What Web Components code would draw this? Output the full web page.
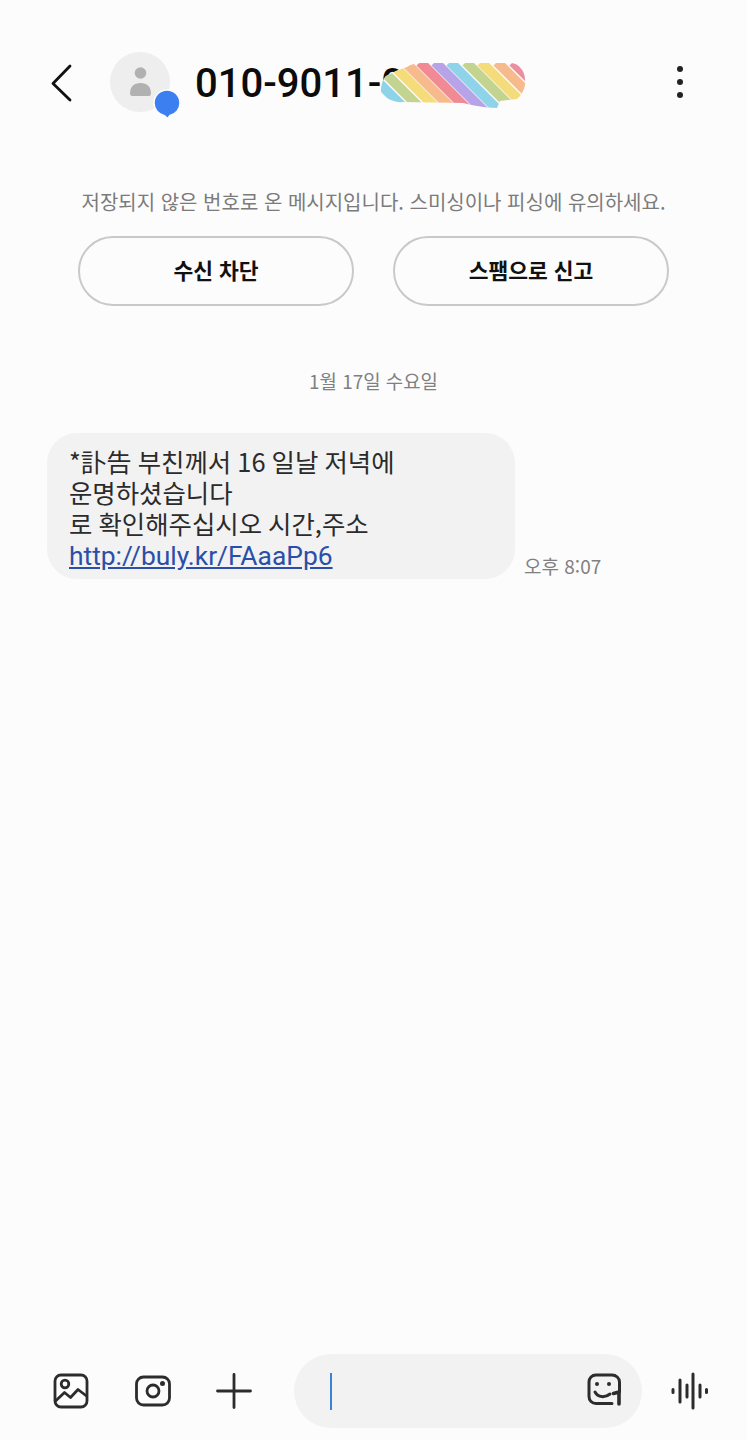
<!DOCTYPE html>
<html lang="ko">
<head>
<meta charset="utf-8">
<title>메시지</title>
<style>
  html, body { margin: 0; padding: 0; background: #fcfcfc; }
  body { font-family: "Noto Sans CJK KR", "Noto Sans", sans-serif; }
</style>
</head>
<body>
<sms-screen>
  <app-bar slot="top" number="010-9011-0"></app-bar>
  <spam-notice slot="top">저장되지 않은 번호로 온 메시지입니다. 스미싱이나 피싱에 유의하세요.</spam-notice>
  <date-line slot="top">1월 17일 수요일</date-line>
  <msg-bubble slot="top" time="오후 8:07">*訃告 부친께서 16 일날 저녁에<br>운명하셨습니다<br>로 확인해주십시오 시간,주소<br><a href="#">http://buly.kr/FAaaPp6</a></msg-bubble>
  <composer-bar slot="bottom"></composer-bar>
</sms-screen>

<script>
function makeTemplate(html) {
  const t = document.createElement('template');
  t.innerHTML = html;
  return t;
}

const screenTpl = makeTemplate(`
  <style>
    :host { display: flex; flex-direction: column; justify-content: space-between; height: 1440px; overflow: hidden; background: #fcfcfc; }
  </style>
  <div><slot name="top"></slot></div>
  <div><slot name="bottom"></slot></div>
`);

class SmsScreen extends HTMLElement {
  constructor() {
    super();
    this.attachShadow({ mode: 'open' });
    this.shadowRoot.appendChild(screenTpl.content.cloneNode(true));
  }
}

const barTpl = makeTemplate(`
  <style>
    :host { display: flex; align-items: center; height: 60px; padding: 52px 0 0 0; }
    .back { width: 24px; height: 40px; margin: 2px 0 0 49px; flex: none; }
    .avatar { position: relative; width: 60px; height: 60px; margin-left: 37px; flex: none; border-radius: 50%; background: #eeeeee; }
    .avatar svg.person { display: block; width: 60px; height: 60px; }
    .badge { position: absolute; left: 43px; top: 37px; width: 28px; height: 30px; }
    .number { position: relative; margin: 3px 0 0 25px; font: 500 40px/60px Roboto, "Noto Sans", sans-serif; color: #0c0c0c; white-space: nowrap; width: 330px; }
    .scribble { position: absolute; left: 186px; top: 8px; width: 146px; height: 48px; }
    .more { width: 10px; height: 36px; margin-left: 150px; flex: none; }
  </style>
  <svg class="back" viewBox="0 0 24 40"><path d="M21 3 L4 20.5 L21 37" fill="none" stroke="#111" stroke-width="2.8" stroke-linecap="round" stroke-linejoin="round"/></svg>
  <div class="avatar">
    <svg class="person" viewBox="0 0 60 60">
      <circle cx="30.500" cy="21" r="5.800" fill="#b1b1b1"/>
      <path d="M20 41.500 C20 35 24 31 30.500 31 C37 31 41 35 41 41.500 C41 43 40 44 39 44 H22 C21 44 20 43 20 41.500 Z" fill="#b1b1b1"/>
    </svg>
    <svg class="badge" viewBox="0 0 28 30">
      <path d="M14 1 C6.800 1 1 6.800 1 14 C1 20.500 5.500 25.500 11.500 26.700 L14.500 29.500 L17 26.500 C23 25.200 27 20 27 14 C27 6.800 21.200 1 14 1 Z" fill="#3b7ff0" stroke="#fcfcfc" stroke-width="1.500"/>
    </svg>
  </div>
  <div class="number"><span id="num"></span>
    <svg class="scribble" viewBox="0 0 146 48">
      <defs>
        <clipPath id="blob">
          <path d="M0 30 C0 22 2 17 5 14 L15 9 L26 5 C30 2 36 1 40 1 L130 1 C138 1 144 10 144 17 C145 24 142 32 136 37 L119 39 L116 46 C105 46 90 43 82 41 L22 40 C14 41 2 36 0 30 Z"/>
        </clipPath>
      </defs>
      <rect width="146" height="48" fill="#fcfcfc" clip-path="url(#blob)"/>
      <g clip-path="url(#blob)" fill="none" stroke-width="10">
        <path d="M-23 0 L32 55" stroke="#8fd3e8"/>
        <path d="M-7 0 L48 55" stroke="#c3d490"/>
        <path d="M9 0 L64 55" stroke="#f5dc7a"/>
        <path d="M24 0 L79 55" stroke="#f7ba8c"/>
        <path d="M39 0 L94 55" stroke="#f08b96"/>
        <path d="M54 0 L109 55" stroke="#b7a3e8"/>
        <path d="M69 0 L124 55" stroke="#8fd3e8"/>
        <path d="M85 0 L140 55" stroke="#c3d490"/>
        <path d="M100 0 L155 55" stroke="#f5dc7a"/>
        <path d="M116 0 L171 55" stroke="#f7ba8c"/>
        <path d="M132 0 L187 55" stroke="#e98fa0"/>
      </g>
    </svg>
  </div>
  <svg class="more" viewBox="0 0 10 36">
    <circle cx="5" cy="5" r="3" fill="#222"/>
    <circle cx="5" cy="18" r="3" fill="#222"/>
    <circle cx="5" cy="31" r="3" fill="#222"/>
  </svg>
`);

class AppBar extends HTMLElement {
  constructor() {
    super();
    this.attachShadow({ mode: 'open' });
    this.shadowRoot.appendChild(barTpl.content.cloneNode(true));
    this.shadowRoot.getElementById('num').textContent = this.getAttribute('number');
  }
}

const noticeTpl = makeTemplate(`
  <style>
    :host { display: block; margin-top: 76px; font-family: "Noto Sans CJK KR", sans-serif; }
    p { margin: 0; text-align: center; font-size: 20px; line-height: 28px; color: #7b7b7b; white-space: nowrap; }
    .btns { display: flex; gap: 39px; margin: 20px 0 0 78px; }
  </style>
  <p><slot></slot></p>
  <div class="btns">
    <pill-button>수신 차단</pill-button>
    <pill-button>스팸으로 신고</pill-button>
  </div>
`);

class SpamNotice extends HTMLElement {
  constructor() {
    super();
    this.attachShadow({ mode: 'open' });
    this.shadowRoot.appendChild(noticeTpl.content.cloneNode(true));
  }
}

const pillTpl = makeTemplate(`
  <style>
    :host { display: flex; align-items: center; justify-content: center; box-sizing: border-box; width: 276px; height: 70px; padding-bottom: 3px; border: 2px solid #c9c9c9; border-radius: 35px; font: 700 21.500px "Noto Sans CJK KR", sans-serif; color: #111; }
  </style>
  <slot></slot>
`);

class PillButton extends HTMLElement {
  constructor() {
    super();
    this.attachShadow({ mode: 'open' });
    this.shadowRoot.appendChild(pillTpl.content.cloneNode(true));
  }
}

const dateTpl = makeTemplate(`
  <style>
    :host { display: block; margin-top: 63px; text-align: center; font: 400 18.900px/24px "Noto Sans CJK KR", sans-serif; color: #808080; }
  </style>
  <slot></slot>
`);

class DateLine extends HTMLElement {
  constructor() {
    super();
    this.attachShadow({ mode: 'open' });
    this.shadowRoot.appendChild(dateTpl.content.cloneNode(true));
  }
}

const bubbleTpl = makeTemplate(`
  <style>
    :host { display: flex; align-items: flex-end; gap: 9px; margin: 40px 0 0 47px; }
    .bubble { box-sizing: border-box; width: 468px; height: 146px; padding: 13px 0 0 22px; background: #f2f2f2; border-radius: 30px; font: 400 25.400px/31px "Noto Sans CJK KR", Roboto, sans-serif; word-spacing: -1px; color: #2b2b2b; white-space: nowrap; }
    .time { font: 400 19px/24px "Noto Sans CJK KR", sans-serif; color: #808080; margin-bottom: 1px; }
    ::slotted(a) { color: #2b4fa8; text-decoration: underline; font-family: Roboto, sans-serif; font-size: 26.400px; }
  </style>
  <div class="bubble"><slot></slot></div>
  <div class="time" id="time"></div>
`);

class MsgBubble extends HTMLElement {
  constructor() {
    super();
    this.attachShadow({ mode: 'open' });
    this.shadowRoot.appendChild(bubbleTpl.content.cloneNode(true));
    this.shadowRoot.getElementById('time').textContent = this.getAttribute('time');
  }
}

const composerTpl = makeTemplate(`
  <style>
    :host { display: flex; align-items: center; height: 74px; padding: 0 0 12px 52px; }
    svg { display: block; flex: none; width: 38px; height: 38px; fill: none; stroke: #2c2c2c; stroke-width: 2.800; stroke-linecap: round; stroke-linejoin: round; }
    .cam { margin-left: 44px; }
    .plus { margin-left: 43px; }
    .input { display: flex; align-items: center; justify-content: space-between; box-sizing: border-box; width: 348px; height: 74px; margin-left: 41px; padding: 0 18px 0 36px; background: #f2f2f2; border-radius: 37px; flex: none; }
    .caret { width: 2px; height: 37px; background: #3a82d8; }
    .wave { margin-left: 29px; }
  </style>
  <svg viewBox="0 0 38 38">
    <rect x="3" y="3" width="32" height="32" rx="6"/>
    <circle cx="13" cy="12" r="3.800"/>
    <path d="M3.500 29 L12.500 20.500 L18.500 25.500 L26 17.500 L34.500 24"/>
  </svg>
  <svg class="cam" viewBox="0 0 38 38">
    <rect x="2.500" y="5" width="33" height="28" rx="7"/>
    <circle cx="19" cy="19" r="6"/>
    <circle cx="28.500" cy="11.500" r="1.100" fill="#2c2c2c"/>
  </svg>
  <svg class="plus" viewBox="0 0 38 38"><path d="M19 2.500 V35.500 M2.500 19 H35.500"/></svg>
  <div class="input">
    <div class="caret"></div>
    <svg viewBox="0 0 38 38" style="stroke-width:3">
      <path d="M26 31.500 H10 C6 31.500 3 28.500 3 24.500 V10 C3 6 6 3 10 3 H26 C30 3 33.500 6 33.500 10 V20"/>
      <circle cx="11" cy="12" r="2" fill="#2c2c2c" stroke="none"/>
      <circle cx="23" cy="12" r="2" fill="#2c2c2c" stroke="none"/>
      <path d="M9 20 C12 25.500 19 26 24 22"/>
      <path d="M27.500 21.500 L33 20 V32" stroke-width="3.600"/>
    </svg>
  </div>
  <svg class="wave" viewBox="0 0 38 38">
    <path d="M2 17.500 V20.500 M9 8 V30 M16 13 V25 M22 2 V36 M29 13 V25 M35.500 17.500 V20.500" stroke-width="3"/>
  </svg>
`);

class ComposerBar extends HTMLElement {
  constructor() {
    super();
    this.attachShadow({ mode: 'open' });
    this.shadowRoot.appendChild(composerTpl.content.cloneNode(true));
  }
}

customElements.define('pill-button', PillButton);
customElements.define('sms-screen', SmsScreen);
customElements.define('app-bar', AppBar);
customElements.define('spam-notice', SpamNotice);
customElements.define('date-line', DateLine);
customElements.define('msg-bubble', MsgBubble);
customElements.define('composer-bar', ComposerBar);
</script>
</body>
</html>
